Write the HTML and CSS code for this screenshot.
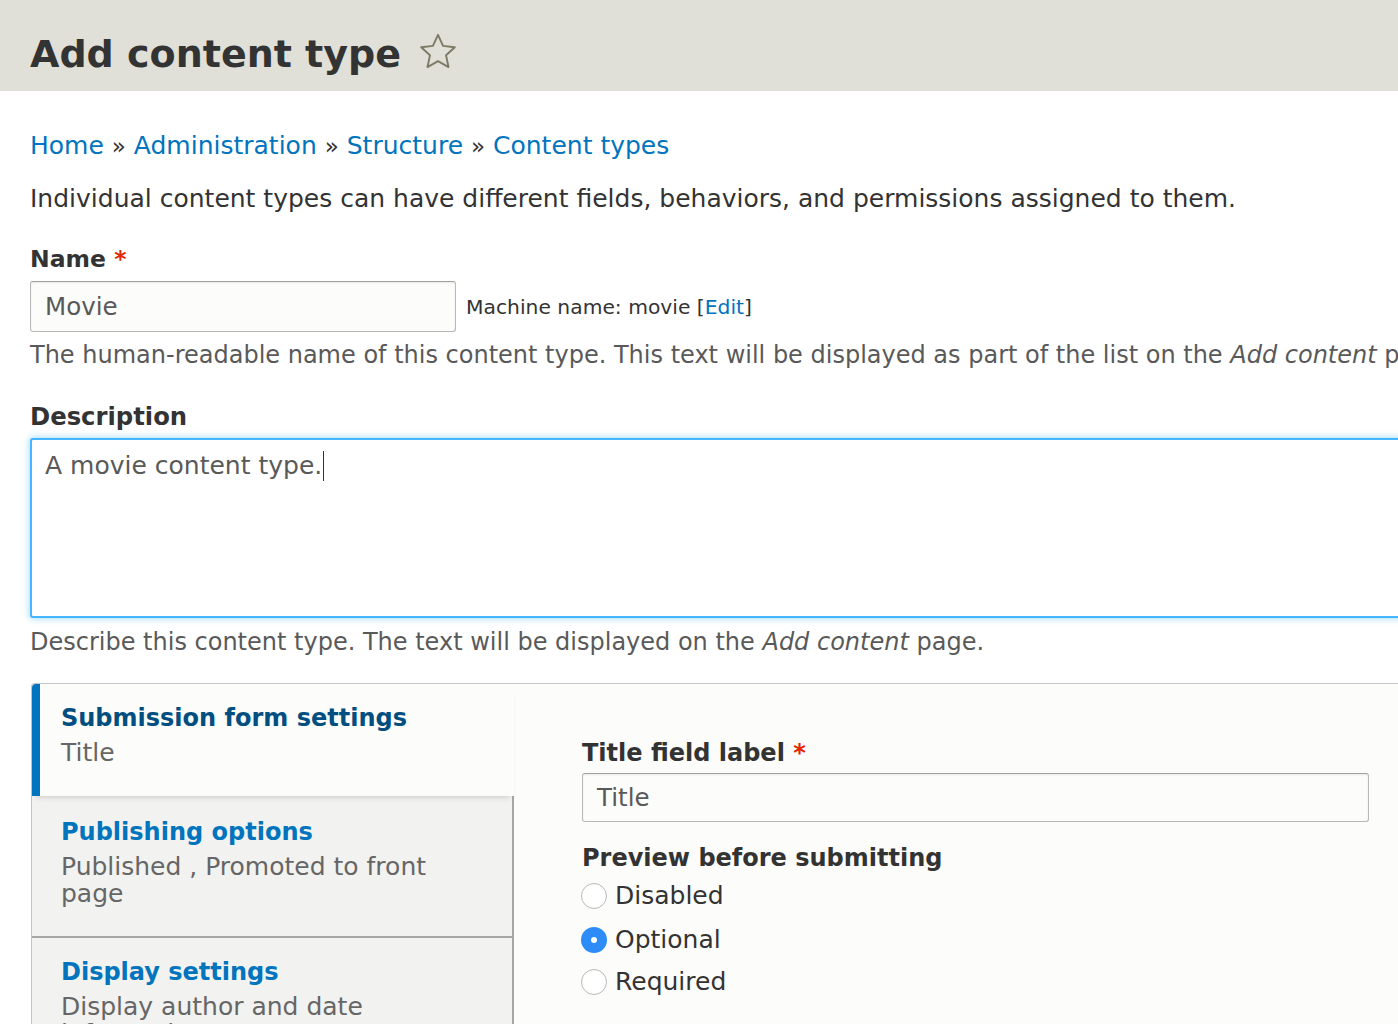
FILE: index.html
```html
<!DOCTYPE html>
<html lang="en">
<head>
<meta charset="utf-8">
<title>Add content type</title>
<link rel="stylesheet" href="styles.css">
</head>
<body>
<div class="page">
  <header class="header">
    <h1 class="title">Add content type</h1>
    <svg class="star" viewBox="0 0 24 24" width="42" height="42" aria-hidden="true">
      <polygon points="12,2.2 14.9,8.5 21.6,9.3 16.6,13.9 18,20.6 12,17.2 6,20.6 7.4,13.9 2.4,9.3 9.1,8.5" fill="none" stroke="#7d7a66" stroke-width="1.1" stroke-linejoin="round"/>
    </svg>
  </header>

  <main class="content">
    <nav class="breadcrumb">
      <a href="#">Home</a> <span class="sep">»</span> <a href="#">Administration</a> <span class="sep">»</span> <a href="#">Structure</a> <span class="sep">»</span> <a href="#">Content types</a>
    </nav>

    <p class="intro">Individual content types can have different fields, behaviors, and permissions assigned to them.</p>

    <div class="field">
      <label class="label">Name <span class="req">*</span></label>
      <div class="name-row">
        <div class="input name-input">Movie</div>
        <span class="machine">Machine name: movie [<a href="#">Edit</a>]</span>
      </div>
      <p class="help">The human-readable name of this content type. This text will be displayed as part of the list on the <em>Add content</em> page. This name must be unique.</p>
    </div>

    <div class="field field-desc">
      <label class="label">Description</label>
      <div class="textarea">A movie content type.<span class="caret"></span></div>
      <p class="help help-desc">Describe this content type. The text will be displayed on the <em>Add content</em> page.</p>
    </div>

    <div class="vtabs">
      <ul class="vtab-list">
        <li class="vtab active">
          <div class="vtab-title">Submission form settings</div>
          <div class="vtab-summary">Title</div>
        </li>
        <li class="vtab">
          <div class="vtab-title">Publishing options</div>
          <div class="vtab-summary">Published , Promoted to front page</div>
        </li>
        <li class="vtab vtab-last">
          <div class="vtab-title">Display settings</div>
          <div class="vtab-summary">Display author and date information.</div>
        </li>
      </ul>
      <div class="vtab-pane">
        <label class="label pane-label">Title field label <span class="req">*</span></label>
        <div class="input pane-input">Title</div>
        <div class="radios">
          <div class="label radios-label">Preview before submitting</div>
          <div class="radio r1"><span class="dot"></span><span class="radio-text">Disabled</span></div>
          <div class="radio r2 checked"><span class="dot"></span><span class="radio-text">Optional</span></div>
          <div class="radio r3"><span class="dot"></span><span class="radio-text">Required</span></div>
        </div>
      </div>
    </div>
  </main>
</div>
</body>
</html>
```

FILE: styles.css
```css
html, body {
  margin: 0;
  padding: 0;
  background: #ffffff;
}
body {
  font-family: "DejaVu Sans", "Liberation Sans", sans-serif;
  color: #333333;
  font-size: 25px;
  line-height: 34px;
}
.page {
  width: 1398px;
  height: 1024px;
  overflow: hidden;
}
a {
  color: #0074bd;
  text-decoration: none;
}
.header {
  background: #e0e0d8;
  height: 91px;
  box-sizing: border-box;
  padding-left: 30px;
  padding-top: 16px;
  display: flex;
  align-items: center;
}
.title {
  margin: 0;
  font-size: 38px;
  font-weight: bold;
  color: #333333;
  line-height: 1;
}
.star {
  margin-left: 16px;
  margin-top: -4px;
}
.content {
  padding-left: 30px;
}
.breadcrumb {
  margin-top: 38px;
  font-size: 25px;
}
.breadcrumb .sep {
  color: #333;
  font-size: 23px;
}
.intro {
  margin: 19px 0 0;
}
.field {
  margin-top: 26px;
}
.label {
  display: block;
  font-weight: bold;
  color: #333;
  font-size: 23.5px;
}
.req {
  color: #e32700;
}
.name-row {
  display: flex;
  align-items: center;
  margin-top: 5px;
}
.input {
  box-sizing: border-box;
  border: 1px solid #b8b8b8;
  border-top-color: #a0a0a0;
  border-radius: 3px;
  background: #fcfcfa;
  color: #595959;
  font-size: 24.5px;
  padding: 0 14px;
  display: flex;
  align-items: center;
  box-shadow: inset 0 1px 2px rgba(0,0,0,0.08);
}
.name-input {
  width: 426px;
  height: 51px;
}
.machine {
  margin-left: 10px;
  font-size: 20.3px;
  color: #333;
}
.help {
  margin: 6px 0 0;
  color: #595959;
  font-size: 24px;
  white-space: nowrap;
}
.help-desc {
  margin-top: 7px;
}
.field-desc {
  margin-top: 28px;
}
.field-desc .label {
  font-size: 24.3px;
}
.textarea {
  margin-top: 4px;
  box-sizing: border-box;
  width: 1420px;
  height: 180px;
  border: 2px solid #45b5ff;
  border-radius: 3px;
  background: #fff;
  box-shadow: 0 0 6px 1px rgba(64, 180, 255, 0.45);
  padding: 9px 13px;
  color: #595959;
}
.caret {
  display: inline-block;
  width: 1px;
  height: 30px;
  background: #333;
  vertical-align: -7px;
  margin-left: 1px;
}
.vtabs {
  margin-top: 24px;
  margin-left: 1px;
  width: 1420px;
  display: flex;
  border: 1px solid #c4c4c4;
  border-right: none;
  border-radius: 4px 0 0 0;
  background: #fcfcfa;
  height: 400px;
}
.vtab-list {
  list-style: none;
  margin: 0;
  padding: 0;
  width: 480px;
  flex: none;
  background: #f2f2f0;
  border-right: 2px solid #a6a6a6;
  border-radius: 4px 0 0 0;
}
.vtab {
  border-bottom: 2px solid #a6a6a6;
  padding: 19px 20px 29px 29px;
}
.vtab.vtab-last {
  padding-top: 17px;
}
.vtab.active {
  background: #fcfcfa;
  border-left: 8px solid #0074bd;
  padding-left: 21px;
  padding-top: 17px;
  margin-right: -2px;
  border-bottom: none;
  height: 112px;
  box-sizing: border-box;
  border-radius: 4px 0 0 0;
  box-shadow: 0 5px 6px -4px rgba(0, 0, 0, 0.18);
  position: relative;
}
.vtab-title {
  font-weight: bold;
  color: #0074bd;
  font-size: 24px;
}
.vtab.active .vtab-title {
  color: #004f80;
}
.vtab-summary {
  color: #666;
  line-height: 27px;
  margin-top: 4px;
  max-width: 400px;
}
.vtab.active .vtab-summary {
  margin-top: 1px;
  line-height: 34px;
}
.vtab-pane {
  padding: 52px 0 0 68px;
  flex: 1;
}
.pane-label {
  font-size: 24px;
}
.pane-input {
  margin-top: 3px;
  width: 787px;
  height: 49px;
}
.radios {
  margin-top: 19px;
}
.radios-label {
  font-size: 24px;
  margin-bottom: 0;
}
.radio {
  display: flex;
  align-items: center;
  margin-left: -1px;
}
.radio.r1 {
  height: 41px;
}
.radio.r2 {
  height: 47px;
}
.radio.r3 {
  height: 37px;
}
.radio .dot {
  width: 26px;
  height: 26px;
  box-sizing: border-box;
  border-radius: 50%;
  border: 1.5px solid #b9b9b9;
  background: #fff;
  margin-right: 8px;
  flex: none;
  position: relative;
}
.radio.checked .dot {
  border: none;
  background: #2d8cf7;
}
.radio.checked .dot::after {
  content: "";
  position: absolute;
  left: 10px;
  top: 10px;
  width: 6px;
  height: 6px;
  border-radius: 50%;
  background: #fff;
}
.radio-text {
  color: #333;
}
```
